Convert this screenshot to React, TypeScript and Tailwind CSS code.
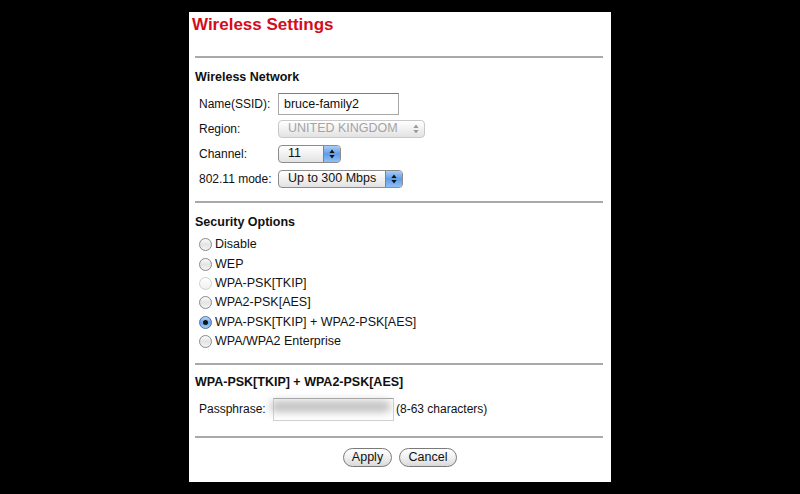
import type { ReactNode } from "react"

const font = { fontFamily: '"Liberation Sans", Arial, Helvetica, sans-serif' }

function Rule({ className = "" }: { className?: string }) {
  return <div className={`ml-[6px] mr-[8px] h-[2px] bg-[#a9a9a9] ${className}`} />
}

function Arrows({ disabled }: { disabled?: boolean }) {
  const c = disabled ? "#9a9a9a" : "#111"
  return (
    <svg width="6" height="10" viewBox="0 0 6 10">
      <path d="M3 0.5 L5.6 4 H0.4 Z" fill={c} />
      <path d="M3 9.5 L5.6 6 H0.4 Z" fill={c} />
    </svg>
  )
}

function Select({ value, width, disabled }: { value: string; width: string; disabled?: boolean }) {
  return (
    <div
      className={`${width} flex h-[18px] items-stretch overflow-hidden rounded-[4px] border ${
        disabled ? "border-[#c8c8c8]" : "border-[#8c8c8c]"
      } bg-gradient-to-b from-white via-[#f1f1f1] to-[#e2e2e2]`}
    >
      <div
        className={`flex flex-1 items-center pl-[9px] text-[12.5px] leading-none ${
          disabled ? "text-[#a3a3a3]" : "text-[#111]"
        }`}
      >
        {value}
      </div>
      <div
        className={`flex w-[17px] items-center justify-center ${
          disabled
            ? ""
            : "border-l border-[#5e86c0] bg-gradient-to-b from-[#a9cdf6] via-[#5f9ce8] to-[#8ec0f4]"
        }`}
      >
        <Arrows disabled={disabled} />
      </div>
    </div>
  )
}

function FieldRow({ label, children, h }: { label: string; children: ReactNode; h: string }) {
  return (
    <div className={`flex ${h} items-center pl-[10px]`}>
      <div className="w-[79px] text-[12px] text-[#111]">{label}</div>
      {children}
    </div>
  )
}

function Radio({ checked, disabled }: { checked?: boolean; disabled?: boolean }) {
  if (checked) {
    return (
      <div className="flex h-[13px] w-[13px] items-center justify-center rounded-full border border-[#4b6fa3] bg-gradient-to-b from-[#bcd8f8] via-[#6aa5ec] to-[#a7cdf6]">
        <div className="h-[5px] w-[5px] rounded-full bg-[#151515]" />
      </div>
    )
  }
  return (
    <div
      className={`h-[13px] w-[13px] rounded-full border ${
        disabled
          ? "border-[#cfcfcf] bg-gradient-to-b from-white to-[#f0f0f0]"
          : "border-[#8a8a8a] bg-gradient-to-b from-[#fbfbfb] via-[#e4e4e4] to-[#f4f4f4]"
      }`}
    />
  )
}

const options = [
  { label: "Disable" },
  { label: "WEP" },
  { label: "WPA-PSK[TKIP]", disabled: true },
  { label: "WPA2-PSK[AES]" },
  { label: "WPA-PSK[TKIP] + WPA2-PSK[AES]", checked: true },
  { label: "WPA/WPA2 Enterprise" },
]

function Button({ label, width }: { label: string; width: string }) {
  return (
    <div
      className={`${width} flex h-[19px] items-center justify-center rounded-full border border-[#7a7a7a] bg-gradient-to-b from-white via-[#f0f0f0] to-[#d9d9d9] text-[12.5px] text-[#111]`}
    >
      {label}
    </div>
  )
}

export default function App() {
  return (
    <div className="flex h-[494px] w-full justify-center bg-black" style={font}>
      <div className="mt-[12px] flex h-[470px] w-[422px] flex-col bg-white">
        {/* Title */}
        <div className="flex h-[26px] items-center pl-[3px] text-[17px] font-bold text-[#d40c1c]">
          Wireless Settings
        </div>
        <Rule className="mt-[18px]" />

        {/* Wireless network */}
        <div className="mt-[10px] flex h-[18px] items-center pl-[6px] text-[12.5px] font-bold text-[#111]">
          Wireless Network
        </div>
        <div className="mt-[6px]" />
        <FieldRow label="Name(SSID):" h="h-[24px]">
          <div className="flex h-[22px] w-[121px] items-center border border-[#a8a8a8] border-t-[#7d7d7d] pl-[5px] text-[12.5px] text-[#111]">
            bruce-family2
          </div>
        </FieldRow>
        <FieldRow label="Region:" h="h-[25px]">
          <Select value="UNITED KINGDOM" width="w-[147px]" disabled />
        </FieldRow>
        <FieldRow label="Channel:" h="h-[25px]">
          <Select value="11" width="w-[63px]" />
        </FieldRow>
        <FieldRow label="802.11 mode:" h="h-[25px]">
          <Select value="Up to 300 Mbps" width="w-[125px]" />
        </FieldRow>
        <Rule className="mt-[10px]" />

        {/* Security options */}
        <div className="mt-[10px] flex h-[18px] items-center pl-[6px] text-[12.5px] font-bold text-[#111]">
          Security Options
        </div>
        <div className="mt-[4px] flex flex-col">
          {options.map((o) => (
            <div key={o.label} className="flex h-[19.4px] items-center gap-[3px] pl-[10px] text-[12.5px] text-[#111]">
              <Radio checked={o.checked} disabled={o.disabled} />
              <span>{o.label}</span>
            </div>
          ))}
        </div>
        <Rule className="mt-[12px]" />

        {/* Passphrase */}
        <div className="mt-[8px] flex h-[18px] items-center pl-[6px] text-[12.5px] font-bold text-[#111]">
          WPA-PSK[TKIP] + WPA2-PSK[AES]
        </div>
        <div className="mt-[6px] flex h-[24px] items-center pl-[10px] text-[12px] text-[#111]">
          <div className="w-[74px]">Passphrase:</div>
          <div className="relative h-[23px] w-[121px] border border-[#d0d0d0] border-t-[#a0a0a0] bg-white">
            <div className="absolute left-[-4px] right-[2px] top-[2px] h-[11px] rounded-full bg-[#bdbdbd] blur-[4px]" />
          </div>
          <div className="pl-[2px]">(8-63 characters)</div>
        </div>
        <Rule className="mt-[15px]" />

        {/* Buttons */}
        <div className="mt-[10px] flex justify-center gap-[7px]">
          <Button label="Apply" width="w-[49px]" />
          <Button label="Cancel" width="w-[58px]" />
        </div>
      </div>
    </div>
  )
}
